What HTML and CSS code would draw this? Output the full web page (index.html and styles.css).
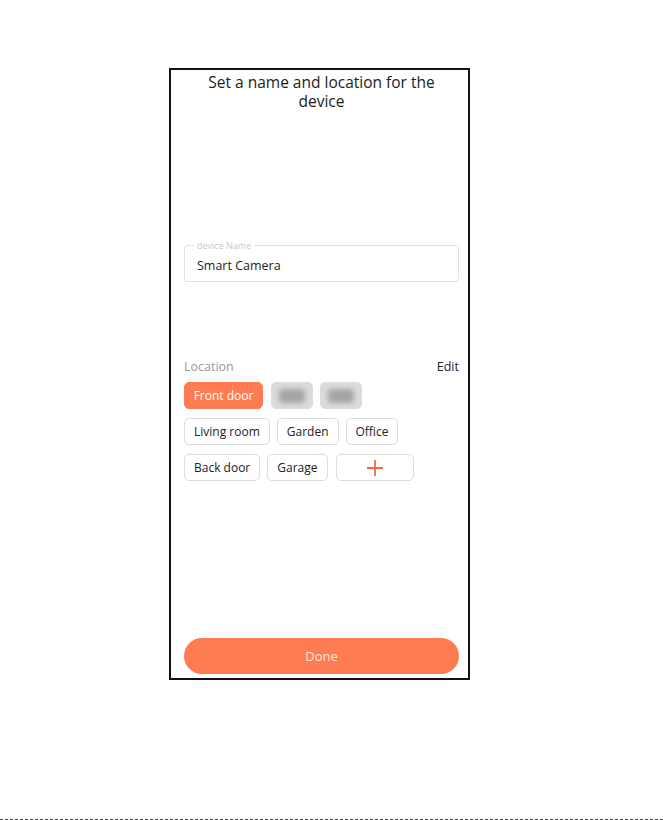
FILE: index.html
```html
<!DOCTYPE html>
<html lang="en">
<head>
  <meta charset="UTF-8">
  <meta name="viewport" content="width=device-width, initial-scale=1.0">
  <title>Device name and location</title>
  <link rel="stylesheet" href="styles.css">
</head>
<body>
  <div class="page">
    <div class="phone">
      <h1 class="title">Set a name and location for the device</h1>

      <div class="field">
        <span class="field-label">device Name</span>
        <div class="field-value">Smart Camera</div>
      </div>

      <div class="location-head">
        <span class="location-label">Location</span>
        <span class="edit">Edit</span>
      </div>

      <div class="chips">
        <div class="chip-row">
          <span class="chip active">Front door</span>
          <span class="chip hidden-chip"><span class="smudge"></span></span>
          <span class="chip hidden-chip"><span class="smudge"></span></span>
        </div>
        <div class="chip-row">
          <span class="chip">Living room</span>
          <span class="chip">Garden</span>
          <span class="chip">Office</span>
        </div>
        <div class="chip-row">
          <span class="chip">Back door</span>
          <span class="chip">Garage</span>
          <span class="chip add">
            <svg width="20" height="20" viewBox="0 0 20 20">
              <path d="M10 2v16M2 10h16" stroke="#f26a45" stroke-width="1.8" fill="none"/>
            </svg>
          </span>
        </div>
      </div>

      <button class="done">Done</button>
    </div>
  </div>
  <div class="dots"></div>
</body>
</html>
```

FILE: styles.css
```css
html, body {
  margin: 0;
  padding: 0;
  background: #fff;
}
body {
  font-family: "Open Sans", "Noto Sans", sans-serif;
  color: #222;
  width: 663px;
  height: 820px;
  position: relative;
  overflow: hidden;
}
.page {
  padding: 68px 0 0 169px;
}
.phone {
  box-sizing: border-box;
  width: 301px;
  height: 612px;
  border: 2px solid #111;
  padding: 3px 9px 4px 13px;
  display: flex;
  flex-direction: column;
}
.title {
  margin: 0 auto;
  width: 250px;
  font-size: 15.5px;
  line-height: 19px;
  font-weight: 500;
  text-align: center;
  color: #1c1c1c;
}
.field {
  position: relative;
  margin-top: 134px;
  height: 37px;
  border: 1px solid #e2e2e2;
  border-radius: 3px;
  box-sizing: border-box;
  padding: 0 12px;
  display: flex;
  align-items: center;
}
.field-label {
  position: absolute;
  top: -6px;
  left: 9px;
  padding: 0 3px;
  background: #fff;
  font-size: 9px;
  line-height: 11px;
  color: #c9c9c9;
}
.field-value {
  font-size: 12.5px;
  color: #222;
  padding-top: 3px;
}
.location-head {
  margin-top: 77px;
  display: flex;
  justify-content: space-between;
  align-items: center;
  font-size: 12.5px;
  line-height: 16px;
}
.location-label {
  color: #9a9a9a;
}
.edit {
  color: #222;
}
.chips {
  margin-top: 7px;
  display: flex;
  flex-direction: column;
  gap: 9px;
}
.chip-row {
  display: flex;
  gap: 7px;
}
.chip {
  box-sizing: border-box;
  height: 27px;
  padding: 0 9px;
  border: 1px solid #dcdcdc;
  border-radius: 5px;
  font-size: 12px;
  white-space: nowrap;
  display: flex;
  align-items: center;
  justify-content: center;
  color: #222;
  background: #fff;
}
.chip.active {
  background: #ff7c52;
  border-color: #ff7c52;
  color: #fff;
  width: 79px;
  margin-right: 1px;
}
.hidden-chip {
  width: 42px;
  background: #dcdcdc;
  border-color: #dcdcdc;
  padding: 0;
}
.smudge {
  width: 26px;
  height: 14px;
  background: #a5a5a5;
  filter: blur(2.5px);
  border-radius: 3px;
}
.add {
  width: 78px;
  margin-left: 1px;
}
.done {
  margin-top: auto;
  height: 36px;
  border: none;
  border-radius: 18px;
  background: #ff7c52;
  color: #fde6dc;
  font-family: inherit;
  font-size: 13px;
  cursor: pointer;
}
.dots {
  position: absolute;
  left: 0;
  right: 0;
  bottom: 0;
  height: 1px;
  border-bottom: 1px dashed #444;
}
```
